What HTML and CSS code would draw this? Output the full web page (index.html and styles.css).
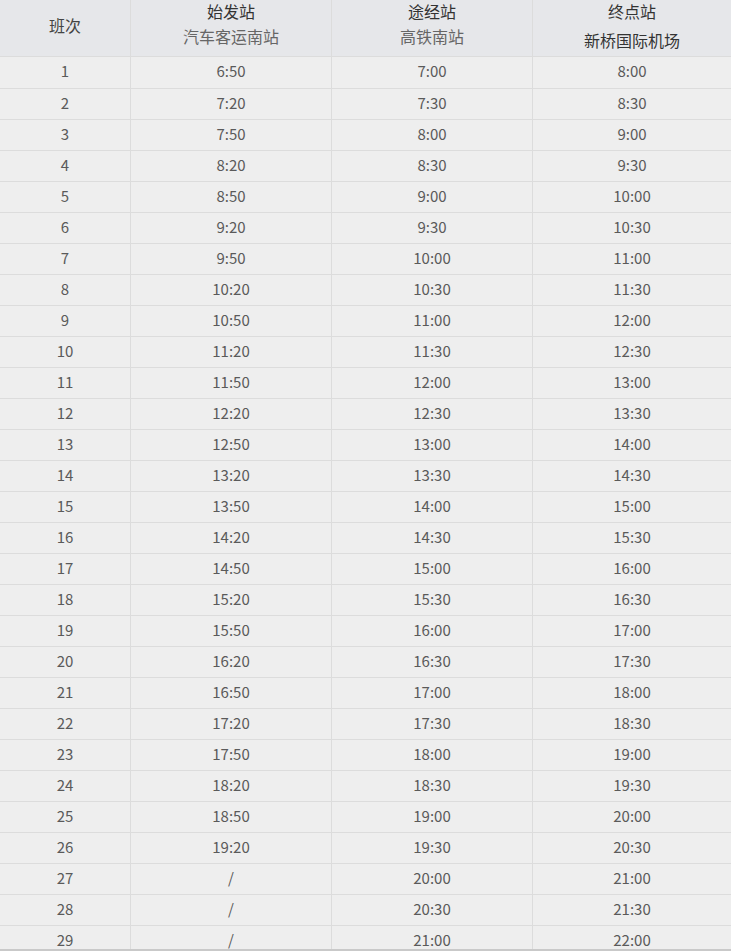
FILE: index.html
```html
<!DOCTYPE html>
<html lang="zh-CN">
<head>
<meta charset="utf-8">
<title>班次时刻表</title>
<link rel="stylesheet" href="styles.css">
</head>
<body>
<div class="frame">
<table class="schedule">
<colgroup>
<col class="c1"><col class="c2"><col class="c3"><col class="c4">
</colgroup>
<thead>
<tr>
<th class="single">班次</th>
<th><div class="l1">始发站</div><div class="l2">汽车客运南站</div></th>
<th><div class="l1">途经站</div><div class="l2">高铁南站</div></th>
<th><div class="l1">终点站</div><div class="l2 far">新桥国际机场</div></th>
</tr>
</thead>
<tbody>
<tr><td>1</td><td>6:50</td><td>7:00</td><td>8:00</td></tr>
<tr><td>2</td><td>7:20</td><td>7:30</td><td>8:30</td></tr>
<tr><td>3</td><td>7:50</td><td>8:00</td><td>9:00</td></tr>
<tr><td>4</td><td>8:20</td><td>8:30</td><td>9:30</td></tr>
<tr><td>5</td><td>8:50</td><td>9:00</td><td>10:00</td></tr>
<tr><td>6</td><td>9:20</td><td>9:30</td><td>10:30</td></tr>
<tr><td>7</td><td>9:50</td><td>10:00</td><td>11:00</td></tr>
<tr><td>8</td><td>10:20</td><td>10:30</td><td>11:30</td></tr>
<tr><td>9</td><td>10:50</td><td>11:00</td><td>12:00</td></tr>
<tr><td>10</td><td>11:20</td><td>11:30</td><td>12:30</td></tr>
<tr><td>11</td><td>11:50</td><td>12:00</td><td>13:00</td></tr>
<tr><td>12</td><td>12:20</td><td>12:30</td><td>13:30</td></tr>
<tr><td>13</td><td>12:50</td><td>13:00</td><td>14:00</td></tr>
<tr><td>14</td><td>13:20</td><td>13:30</td><td>14:30</td></tr>
<tr><td>15</td><td>13:50</td><td>14:00</td><td>15:00</td></tr>
<tr><td>16</td><td>14:20</td><td>14:30</td><td>15:30</td></tr>
<tr><td>17</td><td>14:50</td><td>15:00</td><td>16:00</td></tr>
<tr><td>18</td><td>15:20</td><td>15:30</td><td>16:30</td></tr>
<tr><td>19</td><td>15:50</td><td>16:00</td><td>17:00</td></tr>
<tr><td>20</td><td>16:20</td><td>16:30</td><td>17:30</td></tr>
<tr><td>21</td><td>16:50</td><td>17:00</td><td>18:00</td></tr>
<tr><td>22</td><td>17:20</td><td>17:30</td><td>18:30</td></tr>
<tr><td>23</td><td>17:50</td><td>18:00</td><td>19:00</td></tr>
<tr><td>24</td><td>18:20</td><td>18:30</td><td>19:30</td></tr>
<tr><td>25</td><td>18:50</td><td>19:00</td><td>20:00</td></tr>
<tr><td>26</td><td>19:20</td><td>19:30</td><td>20:30</td></tr>
<tr><td>27</td><td>/</td><td>20:00</td><td>21:00</td></tr>
<tr><td>28</td><td>/</td><td>20:30</td><td>21:30</td></tr>
<tr><td>29</td><td>/</td><td>21:00</td><td>22:00</td></tr>
</tbody>
</table>
</div>
</body>
</html>
```
FILE: styles.css
```css
html, body {
  margin: 0;
  padding: 0;
  overflow: hidden;
  background: #eeeeee;
}
.frame {
  height: 951px;
  box-sizing: border-box;
  border-bottom: 2px solid #c9c9c9;
  overflow: hidden;
}
.schedule {
  width: 731px;
  table-layout: fixed;
  border-collapse: separate;
  border-spacing: 0;
  font-family: "Noto Sans CJK SC", "Noto Sans", sans-serif;
  font-size: 15px;
  color: #5a5a5a;
  text-align: center;
}
.c1 { width: 131px; }
.c2 { width: 201px; }
.c3 { width: 201px; }
.c4 { width: 198px; }
.schedule th,
.schedule td {
  padding: 0;
  border-right: 1px solid #dcdcdc;
  border-bottom: 1px solid #dcdcdc;
  box-sizing: border-box;
}
.schedule th:last-child,
.schedule td:last-child {
  border-right: none;
}
.schedule thead th {
  background: #e6e7ea;
  height: 57px;
  font-size: 16px;
  font-weight: normal;
  vertical-align: top;
  color: #333;
}
.schedule thead th.single {
  vertical-align: middle;
  padding-bottom: 7px;
  color: #444;
}
.l1 {
  line-height: 24px;
  margin-top: -1px;
}
.l2 {
  line-height: 26px;
  color: #666;
}
.l2.far {
  margin-top: 4px;
  color: #333;
}
.schedule tbody td {
  height: 31px;
  line-height: 28px;
  padding-bottom: 1px;
  vertical-align: top;
}
.schedule tbody tr:first-child td {
  height: 32px;
}
```
